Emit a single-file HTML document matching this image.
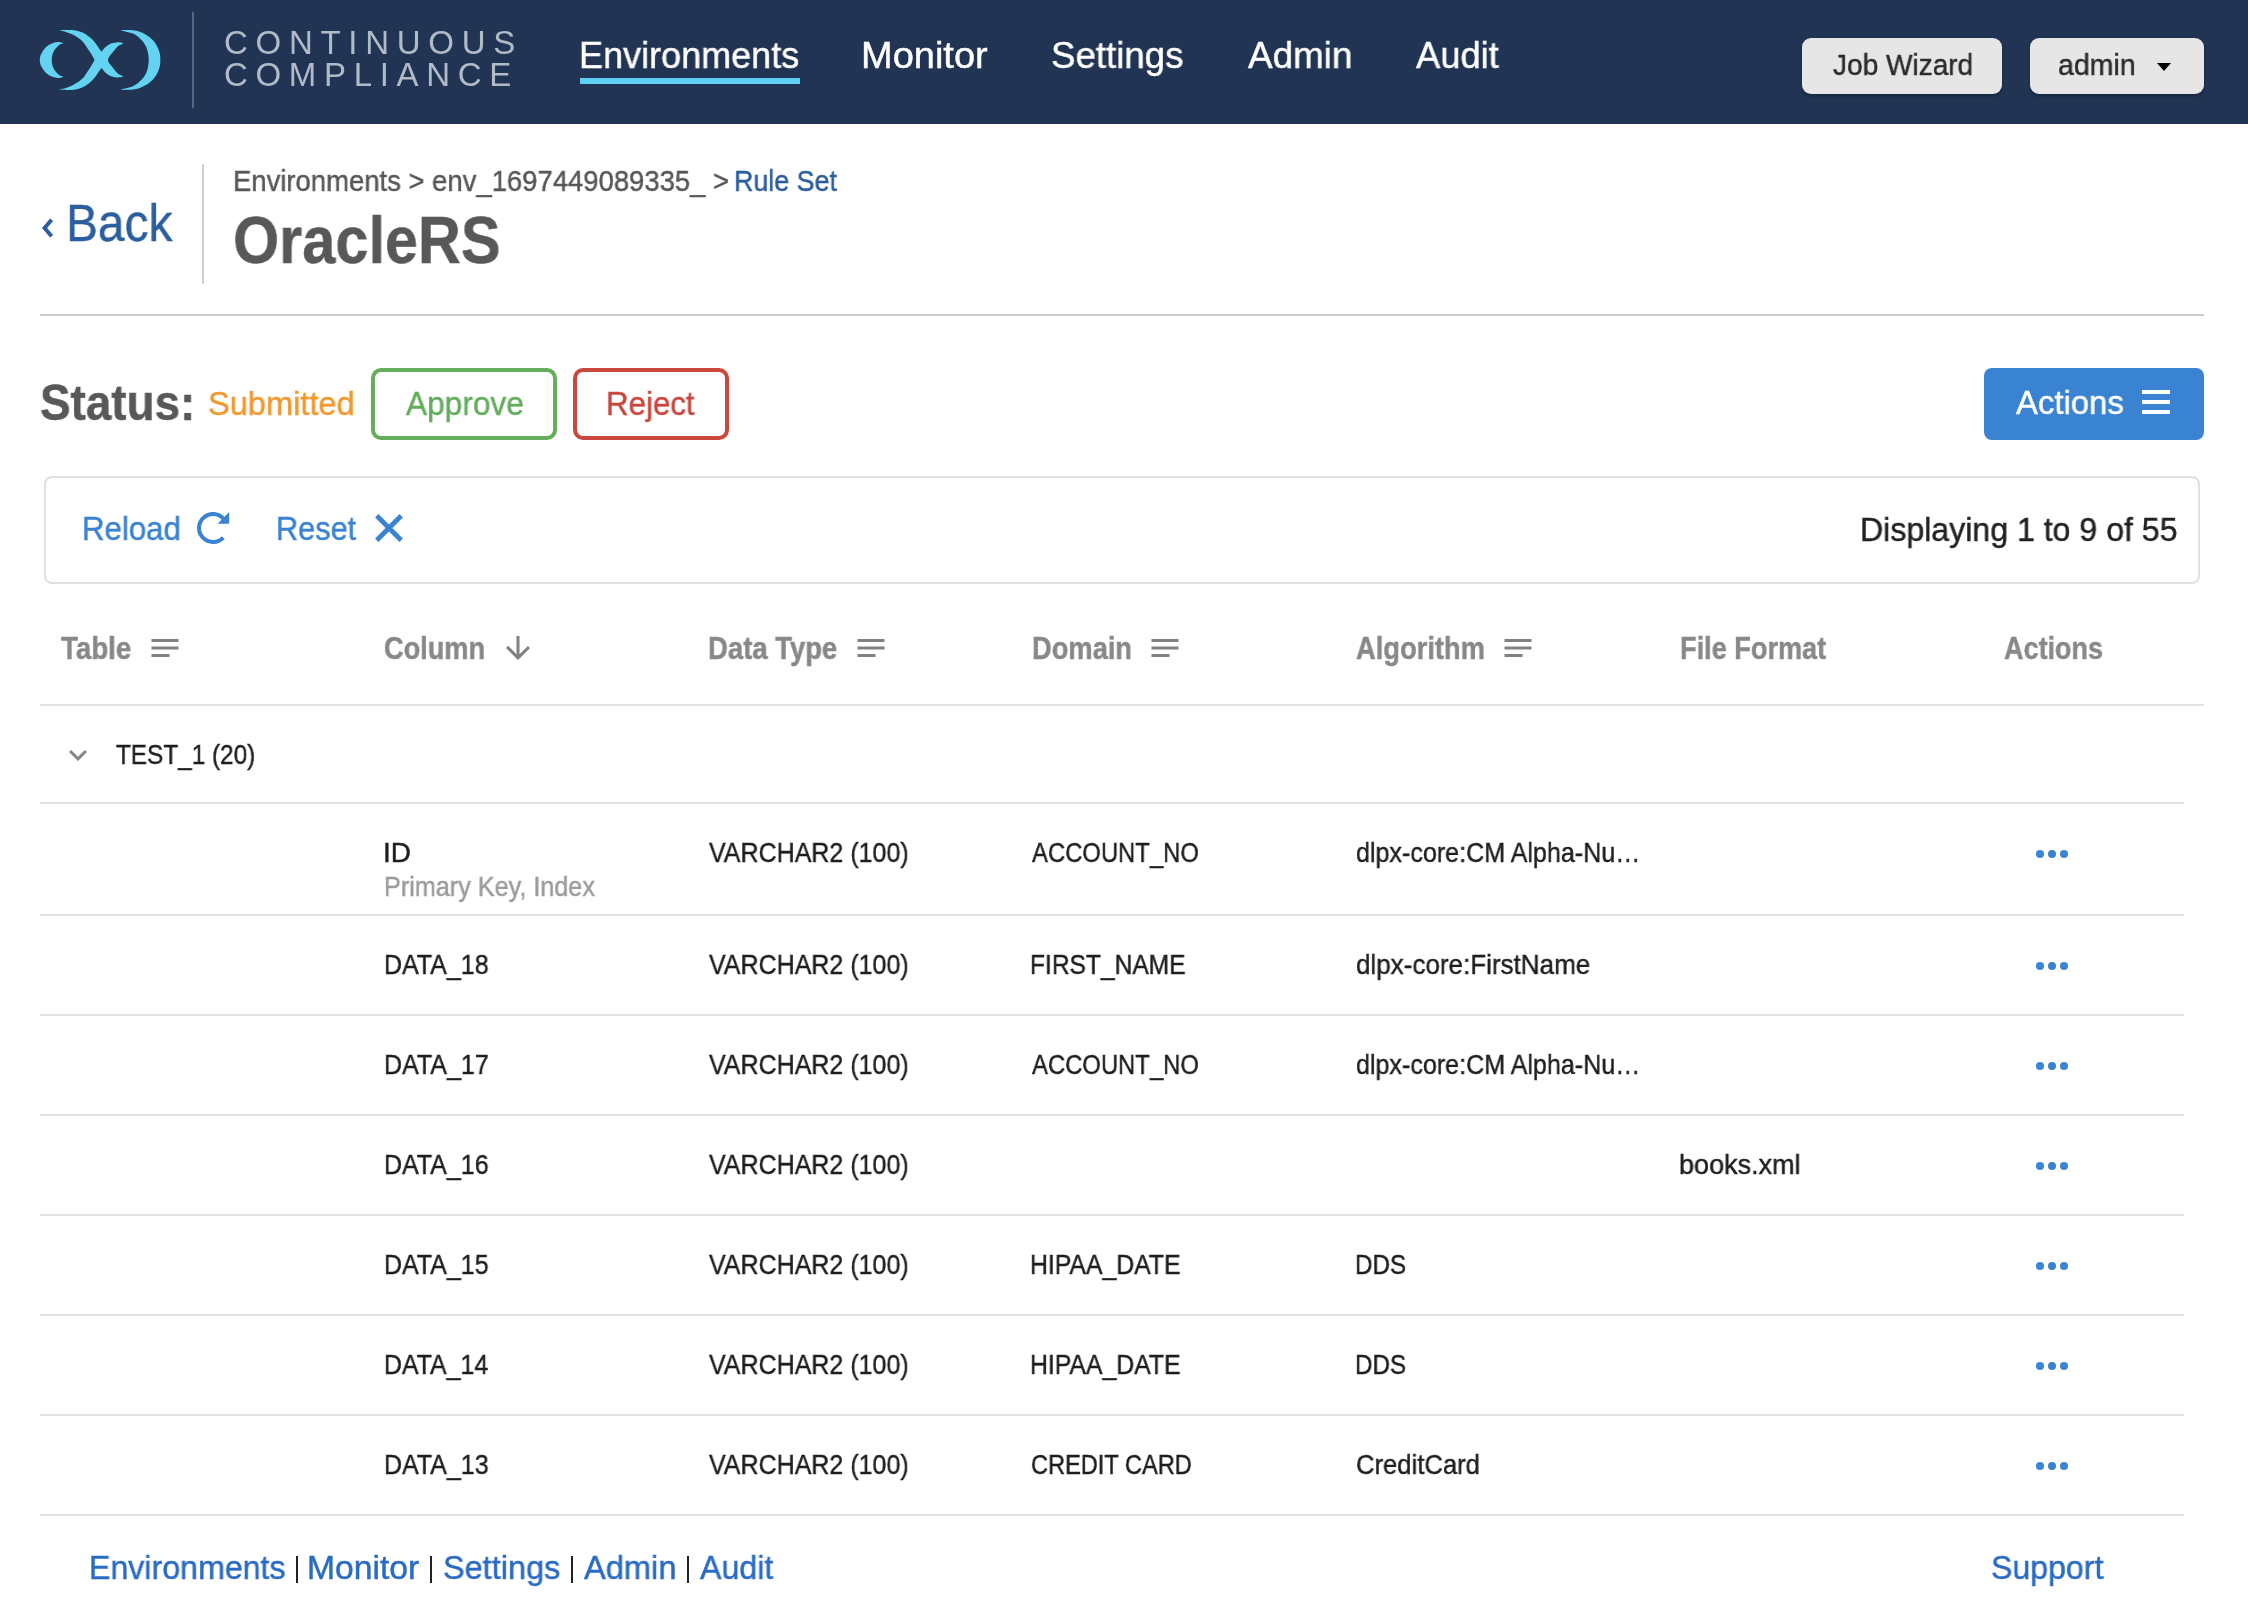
<!DOCTYPE html>
<html lang="en"><head><meta charset="utf-8"><title>OracleRS - Continuous Compliance</title>
<style>
html,body{margin:0;padding:0;background:#fff;width:2248px;height:1604px;overflow:hidden;position:relative}
body{font-family:"Liberation Sans",sans-serif}
.abs{position:absolute;box-sizing:border-box}
.t{position:absolute;white-space:nowrap;transform-origin:0 0;will-change:transform;-webkit-text-stroke:0.45px currentColor;font-family:"Liberation Sans",sans-serif}
.hdr{position:absolute;left:0;top:0;width:2248px;height:124px;background:#213454}
.hbtn{background:#e6e6e6;border-radius:9px;box-shadow:0 2px 3px rgba(0,0,0,.25)}
.dot{width:8px;height:8px;border-radius:50%;background:#3a82d2}
</style></head><body>
<header class="topbar">
<div class="hdr"></div>
<svg class="abs" style="left:0;top:0" width="200" height="124" viewBox="0 0 200 124">
<g fill="#63d3f1">
<path d="M63.40,43.20 C62.92,43.05 61.42,42.48 60.50,42.30 C59.58,42.12 59.23,41.95 57.90,42.10 C56.57,42.25 54.32,42.52 52.50,43.20 C50.68,43.88 48.60,44.92 47.00,46.20 C45.40,47.48 44.00,49.30 42.90,50.90 C41.80,52.50 40.92,54.28 40.40,55.80 C39.88,57.32 39.80,58.60 39.80,60.00 C39.80,61.40 39.88,62.68 40.40,64.20 C40.92,65.72 41.80,67.50 42.90,69.10 C44.00,70.70 45.40,72.52 47.00,73.80 C48.60,75.08 50.68,76.12 52.50,76.80 C54.32,77.48 56.57,77.75 57.90,77.90 C59.23,78.05 59.58,77.88 60.50,77.70 C61.42,77.52 62.92,76.95 63.40,76.80 C62.72,76.52 60.67,76.07 59.30,75.10 C57.93,74.13 56.25,72.37 55.20,71.00 C54.15,69.63 53.55,68.27 53.00,66.90 C52.45,65.53 52.10,63.95 51.90,62.80 C51.70,61.65 51.80,60.93 51.80,60.00 C51.80,59.07 51.70,58.35 51.90,57.20 C52.10,56.05 52.45,54.47 53.00,53.10 C53.55,51.73 54.15,50.37 55.20,49.00 C56.25,47.63 57.93,45.87 59.30,44.90 C60.67,43.93 62.72,43.48 63.40,43.20 Z"/>
<path d="M119.30,30.50 C120.27,30.42 122.82,30.05 125.10,30.00 C127.38,29.95 130.57,29.90 133.00,30.20 C135.43,30.50 137.47,31.00 139.70,31.80 C141.93,32.60 144.15,33.53 146.40,35.00 C148.65,36.47 151.33,38.55 153.20,40.60 C155.07,42.65 156.48,45.05 157.60,47.30 C158.72,49.55 159.45,52.00 159.90,54.10 C160.35,56.20 160.30,57.97 160.30,59.90 C160.30,61.83 160.35,63.60 159.90,65.70 C159.45,67.80 158.72,70.25 157.60,72.50 C156.48,74.75 155.07,77.15 153.20,79.20 C151.33,81.25 148.65,83.33 146.40,84.80 C144.15,86.27 141.93,87.20 139.70,88.00 C137.47,88.80 135.43,89.30 133.00,89.60 C130.57,89.90 127.38,89.85 125.10,89.80 C122.82,89.75 120.27,89.38 119.30,89.30 C120.27,89.15 122.82,88.92 125.10,88.40 C127.38,87.88 130.75,87.17 133.00,86.20 C135.25,85.23 136.92,83.95 138.60,82.60 C140.28,81.25 141.80,79.78 143.10,78.10 C144.40,76.42 145.55,74.57 146.40,72.50 C147.25,70.43 147.82,67.80 148.20,65.70 C148.58,63.60 148.70,61.83 148.70,59.90 C148.70,57.97 148.58,56.20 148.20,54.10 C147.82,52.00 147.25,49.37 146.40,47.30 C145.55,45.23 144.40,43.38 143.10,41.70 C141.80,40.02 140.28,38.55 138.60,37.20 C136.92,35.85 135.25,34.57 133.00,33.60 C130.75,32.63 127.38,31.92 125.10,31.40 C122.82,30.88 120.27,30.65 119.30,30.50 Z"/>
<path d="M59.00,30.30 C59.75,30.25 61.98,30.07 63.50,30.00 C65.02,29.93 66.03,29.83 68.10,29.90 C70.17,29.97 73.48,29.95 75.90,30.40 C78.32,30.85 80.57,31.68 82.60,32.60 C84.63,33.52 86.43,34.72 88.10,35.90 C89.77,37.08 91.22,38.27 92.60,39.70 C93.98,41.13 95.23,42.92 96.40,44.50 C97.57,46.08 98.75,48.00 99.60,49.20 C100.45,50.40 101.18,51.28 101.50,51.70 C102.12,50.97 103.93,48.50 105.20,47.30 C106.47,46.10 107.83,45.22 109.10,44.50 C110.37,43.78 111.50,43.35 112.80,43.00 C114.10,42.65 115.68,42.48 116.90,42.40 C118.12,42.32 119.00,42.40 120.10,42.50 C121.20,42.60 122.93,42.92 123.50,43.00 C123.18,43.20 122.43,43.73 121.60,44.20 C120.77,44.67 119.53,45.02 118.50,45.80 C117.47,46.58 116.43,47.73 115.40,48.90 C114.37,50.07 113.35,51.50 112.30,52.80 C111.25,54.10 109.83,55.52 109.10,56.70 C108.37,57.88 108.10,59.37 107.90,59.90 C108.10,60.43 108.37,61.92 109.10,63.10 C109.83,64.28 111.25,65.70 112.30,67.00 C113.35,68.30 114.37,69.73 115.40,70.90 C116.43,72.07 117.47,73.22 118.50,74.00 C119.53,74.78 120.77,75.13 121.60,75.60 C122.43,76.07 123.18,76.60 123.50,76.80 C122.93,76.88 121.20,77.20 120.10,77.30 C119.00,77.40 118.12,77.48 116.90,77.40 C115.68,77.32 114.10,77.15 112.80,76.80 C111.50,76.45 110.37,76.02 109.10,75.30 C107.83,74.58 106.47,73.70 105.20,72.50 C103.93,71.30 102.12,68.83 101.50,68.10 C101.18,68.52 100.45,69.40 99.60,70.60 C98.75,71.80 97.57,73.72 96.40,75.30 C95.23,76.88 93.98,78.67 92.60,80.10 C91.22,81.53 89.77,82.72 88.10,83.90 C86.43,85.08 84.63,86.28 82.60,87.20 C80.57,88.12 78.32,88.95 75.90,89.40 C73.48,89.85 70.17,89.83 68.10,89.90 C66.03,89.97 65.02,89.87 63.50,89.80 C61.98,89.73 59.75,89.55 59.00,89.50 C60.15,89.23 63.63,88.62 65.90,87.90 C68.17,87.18 70.57,86.17 72.60,85.20 C74.63,84.23 76.43,83.25 78.10,82.10 C79.77,80.95 81.30,79.67 82.60,78.30 C83.90,76.93 84.60,75.75 85.90,73.90 C87.20,72.05 88.95,69.53 90.40,67.20 C91.85,64.87 93.90,61.12 94.60,59.90 C93.90,58.68 91.85,54.93 90.40,52.60 C88.95,50.27 87.20,47.75 85.90,45.90 C84.60,44.05 83.90,42.87 82.60,41.50 C81.30,40.13 79.77,38.85 78.10,37.70 C76.43,36.55 74.63,35.57 72.60,34.60 C70.57,33.63 68.17,32.62 65.90,31.90 C63.63,31.18 60.15,30.57 59.00,30.30 Z"/>
</g></svg>
<div class="abs" style="left:192px;top:12px;width:2px;height:96px;background:#56667f"></div>
<div class="t " style="left:223.65px;top:26.40px;font-size:33px;line-height:33px;color:#b1bac7;letter-spacing:7.721px;-webkit-text-stroke:0;">CONTINUOUS</div>
<div class="t " style="left:223.65px;top:58.10px;font-size:33px;line-height:33px;color:#b1bac7;letter-spacing:7.660px;-webkit-text-stroke:0;">COMPLIANCE</div>
<div class="t " style="left:579.03px;top:37.00px;font-size:37px;line-height:37px;color:#ffffff;transform:scaleX(0.9734);">Environments</div>
<div class="t " style="left:860.87px;top:37.00px;font-size:37px;line-height:37px;color:#ffffff;transform:scaleX(1.0268);">Monitor</div>
<div class="t " style="left:1051.35px;top:37.00px;font-size:37px;line-height:37px;color:#ffffff;transform:scaleX(0.9908);">Settings</div>
<div class="t " style="left:1247.91px;top:37.00px;font-size:37px;line-height:37px;color:#ffffff;transform:scaleX(0.9961);">Admin</div>
<div class="t " style="left:1415.91px;top:37.00px;font-size:37px;line-height:37px;color:#ffffff;transform:scaleX(0.9823);">Audit</div>
<div class="abs" style="left:580px;top:78px;width:220px;height:6px;background:#5fd0f2"></div>
<div class="abs hbtn" style="left:1802px;top:38px;width:200px;height:56px"></div>
<div class="t " style="left:1832.58px;top:50.00px;font-size:30px;line-height:30px;color:#2b2b2b;transform:scaleX(0.9345);">Job Wizard</div>
<div class="abs hbtn" style="left:2030px;top:38px;width:174px;height:56px"></div>
<div class="t " style="left:2058.39px;top:50.00px;font-size:30px;line-height:30px;color:#2b2b2b;transform:scaleX(0.9513);">admin</div>
<div class="abs" style="left:2157px;top:63px;width:0;height:0;border-left:7px solid transparent;border-right:7px solid transparent;border-top:8.5px solid #000"></div>
</header>
<main>
<svg class="abs" style="left:0;top:150px" width="80" height="120" viewBox="0 150 80 120"><polyline points="51.6,219.8 44.6,228 51.6,236.2" fill="none" stroke="#2b5e9e" stroke-width="4"/></svg>
<div class="t " style="left:65.66px;top:198.10px;font-size:51px;line-height:51px;color:#2b5e9e;transform:scaleX(0.9373);">Back</div>
<div class="abs" style="left:202px;top:164px;width:2px;height:120px;background:#cfcfcf"></div>
<div class="t " style="left:233.44px;top:166.00px;font-size:30px;line-height:30px;color:#575757;transform:scaleX(0.9151);">Environments &gt; env_1697449089335_ &gt;</div>
<div class="t " style="left:733.69px;top:166.00px;font-size:30px;line-height:30px;color:#2b5e9e;transform:scaleX(0.8945);">Rule Set</div>
<div class="t " style="left:233.32px;top:206.60px;font-size:66px;line-height:66px;font-weight:bold;color:#585858;transform:scaleX(0.9000);">OracleRS</div>
<div class="abs" style="left:40px;top:314px;width:2164px;height:2px;background:#cbcbcb"></div>
<div class="t " style="left:39.53px;top:377.90px;font-size:50px;line-height:50px;font-weight:bold;color:#585858;transform:scaleX(0.9165);">Status:</div>
<div class="t " style="left:208.33px;top:386.50px;font-size:33px;line-height:33px;color:#f0992f;transform:scaleX(0.9873);">Submitted</div>
<div class="abs" style="left:371px;top:368px;width:186px;height:72px;border:4px solid #63ad5d;border-radius:10px"></div>
<div class="t " style="left:405.52px;top:387.00px;font-size:33px;line-height:33px;color:#63ad5d;transform:scaleX(0.9591);">Approve</div>
<div class="abs" style="left:573px;top:368px;width:156px;height:72px;border:4px solid #c9473f;border-radius:10px"></div>
<div class="t " style="left:605.92px;top:387.00px;font-size:33px;line-height:33px;color:#c9473f;transform:scaleX(0.9483);">Reject</div>
<div class="abs" style="left:1984px;top:368px;width:220px;height:72px;background:#3a82d2;border-radius:8px"></div>
<div class="t " style="left:2015.92px;top:386.30px;font-size:33px;line-height:33px;color:#ffffff;transform:scaleX(0.9962);">Actions</div>
<div class="abs" style="left:2142px;top:390px;width:28px;height:4px;background:#fff"></div>
<div class="abs" style="left:2142px;top:400px;width:28px;height:4px;background:#fff"></div>
<div class="abs" style="left:2142px;top:410px;width:28px;height:4px;background:#fff"></div>
<section class="toolbar">
<div class="abs" style="left:44px;top:476px;width:2156px;height:108px;border:2px solid #e0e0e0;border-radius:8px"></div>
<div class="t " style="left:82.33px;top:511.80px;font-size:33px;line-height:33px;color:#3a82d2;transform:scaleX(0.9454);">Reload</div>
<svg class="abs" style="left:180px;top:500px" width="60" height="60" viewBox="180 500 60 60"><path d="M223.24,537.55 A14,14 0 1,1 224.03,519.38" fill="none" stroke="#3a82d2" stroke-width="4"/><path d="M229.2,512 L229.2,523.8 L217.6,523.8 Z" fill="#3a82d2"/></svg>
<div class="t " style="left:276.37px;top:511.80px;font-size:33px;line-height:33px;color:#3a82d2;transform:scaleX(0.9298);">Reset</div>
<svg class="abs" style="left:360px;top:500px" width="60" height="60" viewBox="360 500 60 60"><path d="M376.8,515.8 L401.2,540.2 M401.2,515.8 L376.8,540.2" fill="none" stroke="#3a82d2" stroke-width="4.8"/></svg>
<div class="t " style="left:1860.15px;top:512.70px;font-size:33px;line-height:33px;color:#222222;transform:scaleX(0.9724);">Displaying 1 to 9 of 55</div>
</section>
<section class="grid">
<div class="t " style="left:60.52px;top:632.60px;font-size:31px;line-height:31px;font-weight:bold;color:#888888;transform:scaleX(0.8921);">Table</div>
<svg class="abs" style="left:146.5px;top:630px" width="36" height="36" viewBox="0 0 24 24"><path fill="#808080" d="M3 6h18v2H3zM3 11h18v2H3zM3 16h12v2H3z"/></svg>
<div class="t " style="left:383.61px;top:632.60px;font-size:31px;line-height:31px;font-weight:bold;color:#888888;transform:scaleX(0.8760);">Column</div>
<div class="t " style="left:707.85px;top:632.60px;font-size:31px;line-height:31px;font-weight:bold;color:#888888;transform:scaleX(0.8861);">Data Type</div>
<svg class="abs" style="left:852.5px;top:630px" width="36" height="36" viewBox="0 0 24 24"><path fill="#808080" d="M3 6h18v2H3zM3 11h18v2H3zM3 16h12v2H3z"/></svg>
<div class="t " style="left:1031.66px;top:632.60px;font-size:31px;line-height:31px;font-weight:bold;color:#888888;transform:scaleX(0.8794);">Domain</div>
<svg class="abs" style="left:1147.0px;top:630px" width="36" height="36" viewBox="0 0 24 24"><path fill="#808080" d="M3 6h18v2H3zM3 11h18v2H3zM3 16h12v2H3z"/></svg>
<div class="t " style="left:1356.02px;top:632.60px;font-size:31px;line-height:31px;font-weight:bold;color:#888888;transform:scaleX(0.8811);">Algorithm</div>
<svg class="abs" style="left:1500.3px;top:630px" width="36" height="36" viewBox="0 0 24 24"><path fill="#808080" d="M3 6h18v2H3zM3 11h18v2H3zM3 16h12v2H3z"/></svg>
<div class="t " style="left:1679.97px;top:632.60px;font-size:31px;line-height:31px;font-weight:bold;color:#888888;transform:scaleX(0.8748);">File Format</div>
<div class="t " style="left:2003.83px;top:632.60px;font-size:31px;line-height:31px;font-weight:bold;color:#888888;transform:scaleX(0.8701);">Actions</div>
<svg class="abs" style="left:500px;top:630px" width="36" height="36" viewBox="0 0 24 24"><path fill="#808080" d="M20 12l-1.41-1.41L13 16.17V4h-2v12.17l-5.58-5.59L4 12l8 8 8-8z"/></svg>
<div class="abs" style="left:40px;top:704px;width:2164px;height:2px;background:#e1e1e1"></div>
<svg class="abs" style="left:60px;top:737px" width="36" height="36" viewBox="0 0 24 24"><path fill="#858585" d="M16.59 8.59L12 13.17 7.41 8.59 6 10l6 6 6-6z"/></svg>
<div class="t " style="left:116.05px;top:741.00px;font-size:28px;line-height:28px;color:#1e1e1e;transform:scaleX(0.8684);">TEST_1 (20)</div>
<div class="abs" style="left:40px;top:802px;width:2144px;height:2px;background:#e1e1e1"></div>
<div class="t " style="left:383.11px;top:839.00px;font-size:28px;line-height:28px;color:#1e1e1e;">ID</div>
<div class="t " style="left:708.57px;top:839.00px;font-size:28px;line-height:28px;color:#1e1e1e;transform:scaleX(0.8931);">VARCHAR2 (100)</div>
<div class="t " style="left:1032.44px;top:839.00px;font-size:28px;line-height:28px;color:#1e1e1e;transform:scaleX(0.8515);">ACCOUNT_NO</div>
<div class="t " style="left:1355.93px;top:839.00px;font-size:28px;line-height:28px;color:#1e1e1e;transform:scaleX(0.8954);">dlpx-core:CM Alpha-Nu…</div>
<div class="abs dot" style="left:2036px;top:850px"></div>
<div class="abs dot" style="left:2048px;top:850px"></div>
<div class="abs dot" style="left:2060px;top:850px"></div>
<div class="t " style="left:383.62px;top:873.00px;font-size:28px;line-height:28px;color:#9b9b9b;transform:scaleX(0.8996);">Primary Key, Index</div>
<div class="abs" style="left:40px;top:914px;width:2144px;height:2px;background:#e1e1e1"></div>
<div class="t " style="left:383.94px;top:951.00px;font-size:28px;line-height:28px;color:#1e1e1e;transform:scaleX(0.8920);">DATA_18</div>
<div class="t " style="left:708.57px;top:951.00px;font-size:28px;line-height:28px;color:#1e1e1e;transform:scaleX(0.8931);">VARCHAR2 (100)</div>
<div class="t " style="left:1030.47px;top:951.00px;font-size:28px;line-height:28px;color:#1e1e1e;transform:scaleX(0.8770);">FIRST_NAME</div>
<div class="t " style="left:1355.89px;top:951.00px;font-size:28px;line-height:28px;color:#1e1e1e;transform:scaleX(0.9294);">dlpx-core:FirstName</div>
<div class="abs dot" style="left:2036px;top:962px"></div>
<div class="abs dot" style="left:2048px;top:962px"></div>
<div class="abs dot" style="left:2060px;top:962px"></div>
<div class="abs" style="left:40px;top:1014px;width:2144px;height:2px;background:#e1e1e1"></div>
<div class="t " style="left:383.94px;top:1051.00px;font-size:28px;line-height:28px;color:#1e1e1e;transform:scaleX(0.8936);">DATA_17</div>
<div class="t " style="left:708.57px;top:1051.00px;font-size:28px;line-height:28px;color:#1e1e1e;transform:scaleX(0.8931);">VARCHAR2 (100)</div>
<div class="t " style="left:1032.44px;top:1051.00px;font-size:28px;line-height:28px;color:#1e1e1e;transform:scaleX(0.8515);">ACCOUNT_NO</div>
<div class="t " style="left:1355.93px;top:1051.00px;font-size:28px;line-height:28px;color:#1e1e1e;transform:scaleX(0.8954);">dlpx-core:CM Alpha-Nu…</div>
<div class="abs dot" style="left:2036px;top:1062px"></div>
<div class="abs dot" style="left:2048px;top:1062px"></div>
<div class="abs dot" style="left:2060px;top:1062px"></div>
<div class="abs" style="left:40px;top:1114px;width:2144px;height:2px;background:#e1e1e1"></div>
<div class="t " style="left:383.94px;top:1151.00px;font-size:28px;line-height:28px;color:#1e1e1e;transform:scaleX(0.8920);">DATA_16</div>
<div class="t " style="left:708.57px;top:1151.00px;font-size:28px;line-height:28px;color:#1e1e1e;transform:scaleX(0.8931);">VARCHAR2 (100)</div>
<div class="t " style="left:1679.24px;top:1151.00px;font-size:28px;line-height:28px;color:#1e1e1e;transform:scaleX(0.9644);">books.xml</div>
<div class="abs dot" style="left:2036px;top:1162px"></div>
<div class="abs dot" style="left:2048px;top:1162px"></div>
<div class="abs dot" style="left:2060px;top:1162px"></div>
<div class="abs" style="left:40px;top:1214px;width:2144px;height:2px;background:#e1e1e1"></div>
<div class="t " style="left:383.94px;top:1251.00px;font-size:28px;line-height:28px;color:#1e1e1e;transform:scaleX(0.8914);">DATA_15</div>
<div class="t " style="left:708.57px;top:1251.00px;font-size:28px;line-height:28px;color:#1e1e1e;transform:scaleX(0.8931);">VARCHAR2 (100)</div>
<div class="t " style="left:1030.46px;top:1251.00px;font-size:28px;line-height:28px;color:#1e1e1e;transform:scaleX(0.8850);">HIPAA_DATE</div>
<div class="t " style="left:1355.01px;top:1251.00px;font-size:28px;line-height:28px;color:#1e1e1e;transform:scaleX(0.8636);">DDS</div>
<div class="abs dot" style="left:2036px;top:1262px"></div>
<div class="abs dot" style="left:2048px;top:1262px"></div>
<div class="abs dot" style="left:2060px;top:1262px"></div>
<div class="abs" style="left:40px;top:1314px;width:2144px;height:2px;background:#e1e1e1"></div>
<div class="t " style="left:383.95px;top:1351.00px;font-size:28px;line-height:28px;color:#1e1e1e;transform:scaleX(0.8887);">DATA_14</div>
<div class="t " style="left:708.57px;top:1351.00px;font-size:28px;line-height:28px;color:#1e1e1e;transform:scaleX(0.8931);">VARCHAR2 (100)</div>
<div class="t " style="left:1030.46px;top:1351.00px;font-size:28px;line-height:28px;color:#1e1e1e;transform:scaleX(0.8850);">HIPAA_DATE</div>
<div class="t " style="left:1355.01px;top:1351.00px;font-size:28px;line-height:28px;color:#1e1e1e;transform:scaleX(0.8636);">DDS</div>
<div class="abs dot" style="left:2036px;top:1362px"></div>
<div class="abs dot" style="left:2048px;top:1362px"></div>
<div class="abs dot" style="left:2060px;top:1362px"></div>
<div class="abs" style="left:40px;top:1414px;width:2144px;height:2px;background:#e1e1e1"></div>
<div class="t " style="left:383.94px;top:1451.00px;font-size:28px;line-height:28px;color:#1e1e1e;transform:scaleX(0.8920);">DATA_13</div>
<div class="t " style="left:708.57px;top:1451.00px;font-size:28px;line-height:28px;color:#1e1e1e;transform:scaleX(0.8931);">VARCHAR2 (100)</div>
<div class="t " style="left:1031.32px;top:1451.00px;font-size:28px;line-height:28px;color:#1e1e1e;transform:scaleX(0.8427);">CREDIT CARD</div>
<div class="t " style="left:1355.72px;top:1451.00px;font-size:28px;line-height:28px;color:#1e1e1e;transform:scaleX(0.9151);">CreditCard</div>
<div class="abs dot" style="left:2036px;top:1462px"></div>
<div class="abs dot" style="left:2048px;top:1462px"></div>
<div class="abs dot" style="left:2060px;top:1462px"></div>
<div class="abs" style="left:40px;top:1514px;width:2144px;height:2px;background:#e1e1e1"></div>
</section>
</main>
<footer>
<div class="t " style="left:88.55px;top:1551.00px;font-size:33px;line-height:33px;color:#2a6bc3;transform:scaleX(0.9741);">Environments</div>
<div class="t " style="left:307.22px;top:1551.00px;font-size:33px;line-height:33px;color:#2a6bc3;transform:scaleX(1.0193);">Monitor</div>
<div class="t " style="left:442.74px;top:1551.00px;font-size:33px;line-height:33px;color:#2a6bc3;transform:scaleX(0.9839);">Settings</div>
<div class="t " style="left:584.42px;top:1551.00px;font-size:33px;line-height:33px;color:#2a6bc3;transform:scaleX(0.9887);">Admin</div>
<div class="t " style="left:700.32px;top:1551.00px;font-size:33px;line-height:33px;color:#2a6bc3;transform:scaleX(0.9758);">Audit</div>
<div class="abs" style="left:295.5px;top:1556px;width:2.6px;height:27px;background:#222"></div>
<div class="abs" style="left:429.5px;top:1556px;width:2.6px;height:27px;background:#222"></div>
<div class="abs" style="left:570.5px;top:1556px;width:2.6px;height:27px;background:#222"></div>
<div class="abs" style="left:686.5px;top:1556px;width:2.6px;height:27px;background:#222"></div>
<div class="t " style="left:1990.56px;top:1551.00px;font-size:33px;line-height:33px;color:#2a6bc3;transform:scaleX(0.9723);">Support</div>
</footer>
</body></html>
